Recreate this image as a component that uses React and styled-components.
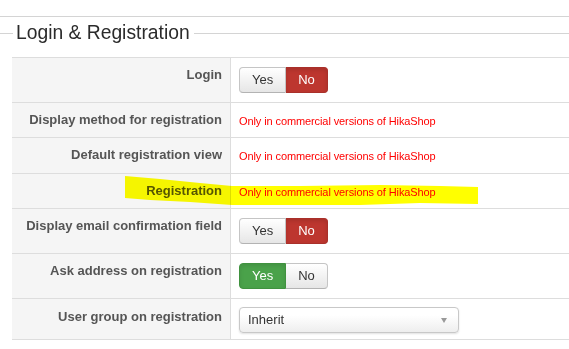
import React from 'react';
import styled, { createGlobalStyle, css } from 'styled-components';

const Global = createGlobalStyle`
  html, body { margin: 0; padding: 0; background: #fff; overflow: hidden; }
  body { font-family: "Liberation Sans", Arial, Helvetica, sans-serif; }
  * { box-sizing: border-box; }
`;

const Page = styled.div`
  position: relative;
  width: 569px;
  height: 349px;
  overflow: hidden;
`;

const TopRule = styled.div`
  height: 17px;
  border-bottom: 1px solid #d4d4d4;
`;

const LegendRow = styled.div`
  display: flex;
  align-items: center;
  height: 24px;
  margin-top: 4px;
  &::before {
    content: '';
    width: 13px;
    border-top: 1px solid #d4d4d4;
  }
  &::after {
    content: '';
    flex: 1;
    border-top: 1px solid #d4d4d4;
  }
`;

const Legend = styled.h3`
  margin: 0;
  padding: 0 4px 0 3px;
  font-size: 19.3px;
  font-weight: normal;
  line-height: 24px;
  color: #2b2b2b;
`;

const Table = styled.div`
  margin: 12px 0 0 12px;
  width: 600px;
  border-bottom: 1px solid #ddd;
`;

const Row = styled.div`
  display: grid;
  grid-template-columns: 219px 1fr;
  border-top: 1px solid #ddd;
  height: ${p => p.$h}px;
`;

const Label = styled.div`
  background: #f5f5f5;
  border-right: 1px solid #ddd;
  text-align: right;
  padding: ${p => p.$pt ?? 8}px 8px 0 0;
  font-size: 13px;
  line-height: 18px;
  font-weight: bold;
  color: #555;
`;

const Value = styled.div`
  padding: ${p => p.$pt ?? 8}px 0 0 8px;
`;

const Notice = styled.span`
  font-size: 11px;
  line-height: 18px;
  letter-spacing: -0.1px;
  color: #f00;
`;

const Group = styled.div`
  display: inline-flex;
`;

const variants = {
  default: css`
    color: #333;
    background: linear-gradient(#ffffff, #e6e6e6);
    border-color: #c5c5c5 #c5c5c5 #b3b3b3;
  `,
  danger: css`
    color: #fff;
    background: #bd362f;
    border-color: #a9302a;
    box-shadow: inset 0 2px 4px rgba(0, 0, 0, 0.12);
  `,
  success: css`
    color: #fff;
    background: #4aa24a;
    border-color: #40923f;
    box-shadow: inset 0 2px 4px rgba(0, 0, 0, 0.1);
  `,
};

const Btn = styled.span`
  display: inline-block;
  height: 26px;
  padding: 0 12px;
  font-size: 13px;
  line-height: 24px;
  border: 1px solid;
  ${p => variants[p.$v || 'default']}
  &:first-child { border-radius: 4px 0 0 4px; }
  &:last-child { border-radius: 0 4px 4px 0; border-left: 0; }
`;

const Select = styled.div`
  position: relative;
  width: 220px;
  height: 26px;
  border: 1px solid #c8c8c8;
  border-radius: 4px;
  background: linear-gradient(#ffffff 0%, #ffffff 30%, #eeeeee 100%);
  box-shadow: 0 1px 2px rgba(0, 0, 0, 0.12);
  padding-left: 8px;
  font-size: 13px;
  line-height: 24px;
  color: #333;
  &::after {
    content: '';
    position: absolute;
    right: 11px;
    top: 10px;
    border-left: 3.5px solid transparent;
    border-right: 3.5px solid transparent;
    border-top: 5px solid #999;
  }
`;

const Highlight = styled.svg`
  position: absolute;
  left: 0;
  top: 0;
  pointer-events: none;
  mix-blend-mode: multiply;
`;

const YesNo = ({ on }) => (
  <Group>
    <Btn $v={on === 'yes' ? 'success' : 'default'}>Yes</Btn>
    <Btn $v={on === 'no' ? 'danger' : 'default'}>No</Btn>
  </Group>
);

const NOTICE = 'Only in commercial versions of HikaShop';

export default function App() {
  return (
    <Page>
      <Global />
      <TopRule />
      <LegendRow>
        <Legend>Login &amp; Registration</Legend>
      </LegendRow>
      <Table>
        <Row $h={45}>
          <Label>Login</Label>
          <Value $pt={9}><YesNo on="no" /></Value>
        </Row>
        <Row $h={35}>
          <Label>Display method for registration</Label>
          <Value><Notice>{NOTICE}</Notice></Value>
        </Row>
        <Row $h={36}>
          <Label>Default registration view</Label>
          <Value><Notice>{NOTICE}</Notice></Value>
        </Row>
        <Row $h={35}>
          <Label>Registration</Label>
          <Value><Notice>{NOTICE}</Notice></Value>
        </Row>
        <Row $h={45}>
          <Label>Display email confirmation field</Label>
          <Value $pt={9}><YesNo on="no" /></Value>
        </Row>
        <Row $h={45}>
          <Label>Ask address on registration</Label>
          <Value $pt={9}><YesNo on="yes" /></Value>
        </Row>
        <Row $h={41}>
          <Label $pt={9}>User group on registration</Label>
          <Value $pt={8}><Select>Inherit</Select></Value>
        </Row>
      </Table>
      <Highlight width="569" height="349" viewBox="0 0 569 349">
        <polygon
          fill="#ffff00"
          points="125,176 160,179 200,183 232,186 300,186 380,185 440,186 478,187 478,204 420,203 360,205 300,205 232,205 190,202 150,200 125,198"
        />
      </Highlight>
    </Page>
  );
}
